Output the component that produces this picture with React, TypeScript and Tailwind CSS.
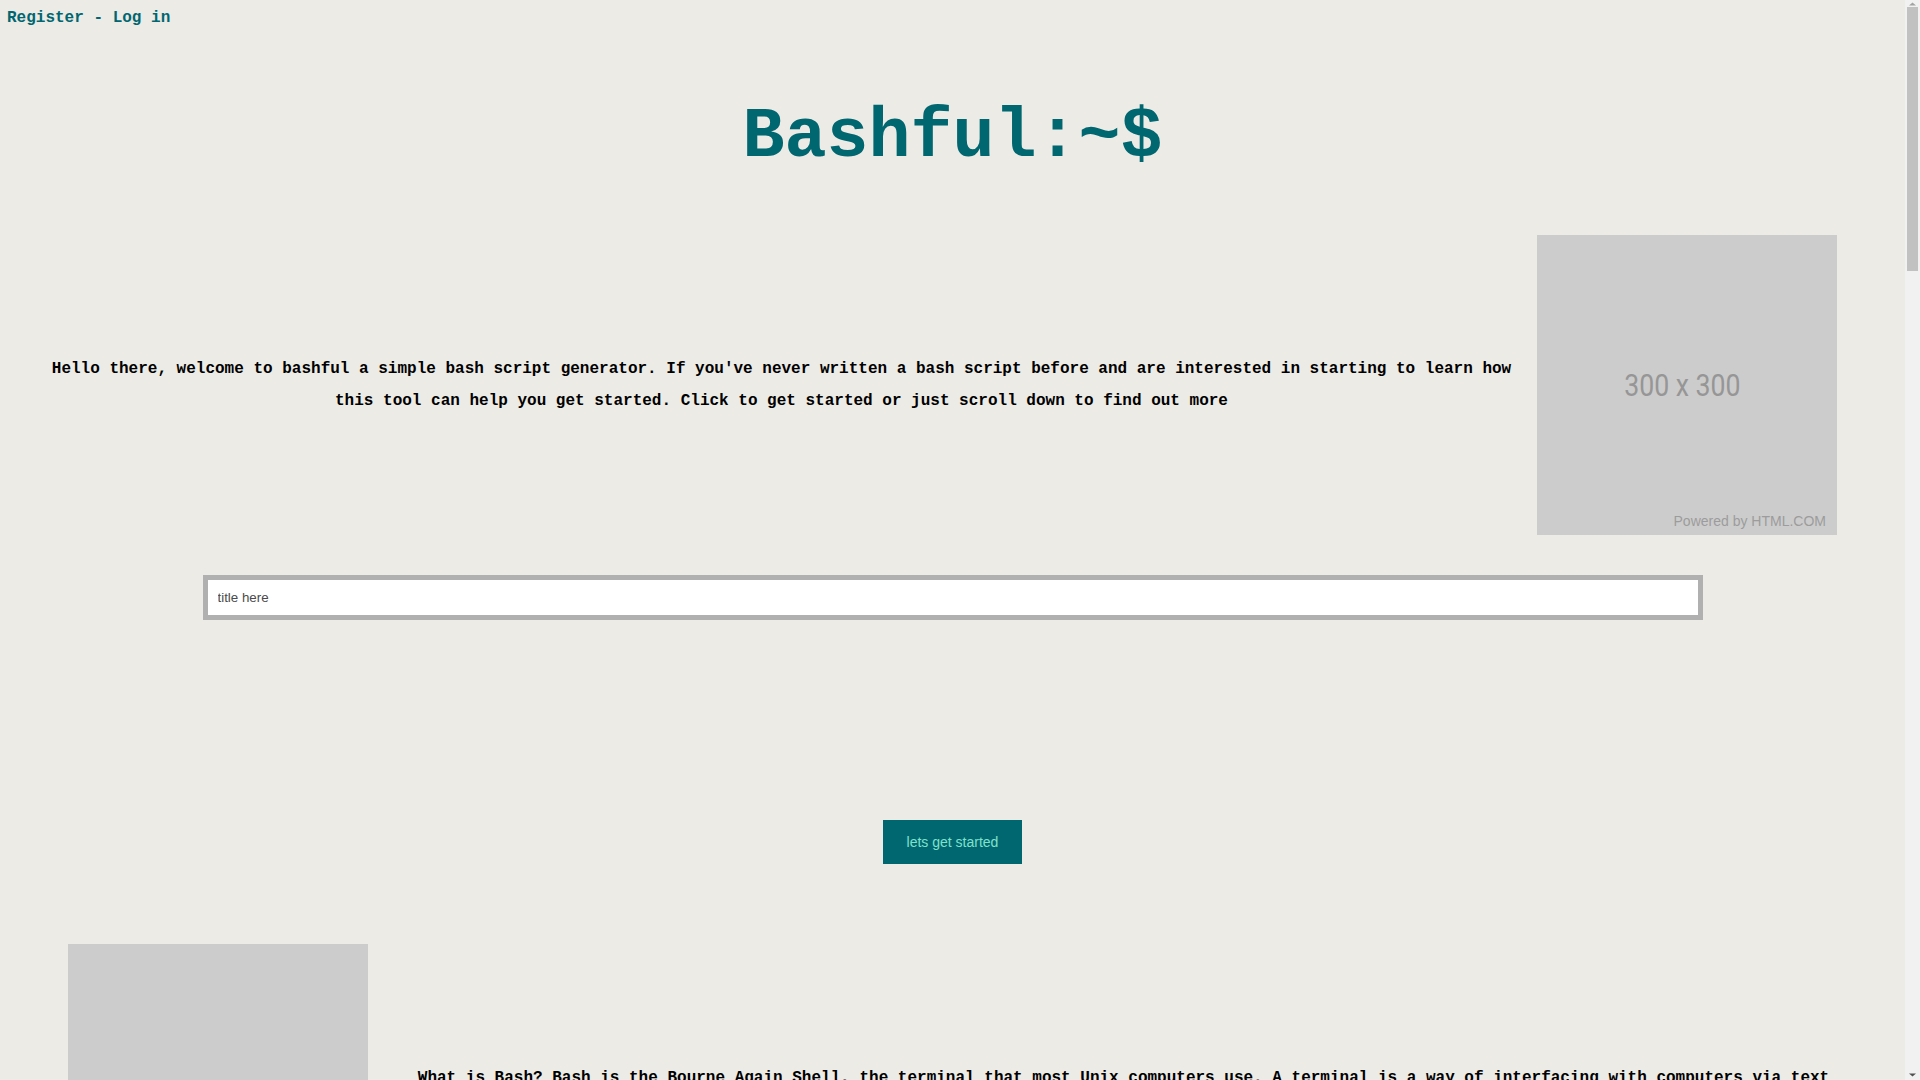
import { FC } from "react";

const mono = "font-['Liberation_Mono',_'DejaVu_Sans_Mono',_monospace]";

const Placeholder: FC = () => {
  return (
    <div className="relative flex h-[300px] w-[300px] shrink-0 items-center justify-center bg-[#cccccc]">
      <span className="pr-[10px] font-['Roboto',_sans-serif] text-[31px] leading-none text-[#969696] scale-x-[0.86]">
        300 x 300
      </span>
      <span className="absolute right-[11px] bottom-[7px] font-['Liberation_Sans',_Arial,_sans-serif] text-[14px] leading-none text-[#9c9c9c]">
        Powered by HTML.COM
      </span>
    </div>
  );
};

interface InfoRowProps {
  text: string;
  imageLeft?: boolean;
}

const InfoRow: FC<InfoRowProps> = ({ text, imageLeft }) => {
  return (
    <div
      className={`flex items-center ${
        imageLeft ? "flex-row-reverse pl-[68px] pr-[38px]" : "flex-row pl-[38px] pr-[68px]"
      }`}
    >
      <p
        className={`flex-1 text-center text-[16px] leading-8 font-bold text-black ${
          imageLeft ? "ml-[12px]" : "mr-[12px]"
        }`}
      >
        {text}
      </p>
      <Placeholder />
    </div>
  );
};

const ScrollBar: FC = () => {
  return (
    <div className="flex h-screen w-[15px] shrink-0 flex-col items-center bg-[#f1f1f1]">
      <svg width="9" height="7" viewBox="0 0 9 7" className="shrink-0">
        <path d="M1 5.5 L4.5 2.5 L8 5.5 Z" fill="#a3a3a3" />
      </svg>
      <div className="h-[264px] w-[11px] shrink-0 bg-[#c1c1c1]" />
      <div className="flex-1" />
      <svg width="9" height="8" viewBox="0 0 9 8" className="shrink-0">
        <path d="M1 1.5 L4.5 4.5 L8 1.5 Z" fill="#505050" />
      </svg>
    </div>
  );
};

export default function App() {
  return (
    <div className={`flex h-screen overflow-hidden bg-[#ecebe6] ${mono}`}>
      <main className="min-w-0 flex-1">
        <nav className="px-[7px] pt-[6px] text-[16px] leading-6 font-bold text-[#006670]">
          <a href="#">Register</a> - <a href="#">Log in</a>
        </nav>

        <h1 className="mt-[73px] text-center text-[70px] leading-none font-bold text-[#006670]">
          Bashful:~$
        </h1>

        <div className="mt-[62px]">
          <InfoRow text="Hello there, welcome to bashful a simple bash script generator. If you've never written a bash script before and are interested in starting to learn how this tool can help you get started. Click to get started or just scroll down to find out more" />
        </div>

        <div className="mt-[40px] flex justify-center">
          <input
            type="text"
            placeholder="title here"
            className="h-[45px] w-[1500px] border-[5px] border-[#b0b0b0] bg-white px-[10px] font-['Liberation_Sans',_Arial,_sans-serif] text-[13.33px] text-[#444] outline-none placeholder:text-[#4a4a4a]"
          />
        </div>

        <div className="mt-[200px] flex justify-center">
          <button className="h-[44px] w-[139px] bg-[#006670] font-['Liberation_Sans',_Arial,_sans-serif] text-[14px] text-[#7fe2cb]">
            lets get started
          </button>
        </div>

        <div className="mt-[80px] flex flex-col gap-[80px] pb-[80px]">
          <InfoRow
            imageLeft
            text="What is Bash? Bash is the Bourne Again Shell, the terminal that most Unix computers use. A terminal is a way of interfacing with computers via text commands instead of clicking through windows, and a bash script is a file full of those commands"
          />
          <InfoRow text="What is a bash script? A bash script is a plain text file that lists commands one after another, so that a job you would normally type by hand can be run again and again with a single command from the terminal" />
          <InfoRow
            imageLeft
            text="How does bashful work? Give your script a title, pick the steps you want it to take and bashful writes the script for you, ready to be copied, saved and run on your own machine"
          />
        </div>
      </main>
      <ScrollBar />
    </div>
  );
}
